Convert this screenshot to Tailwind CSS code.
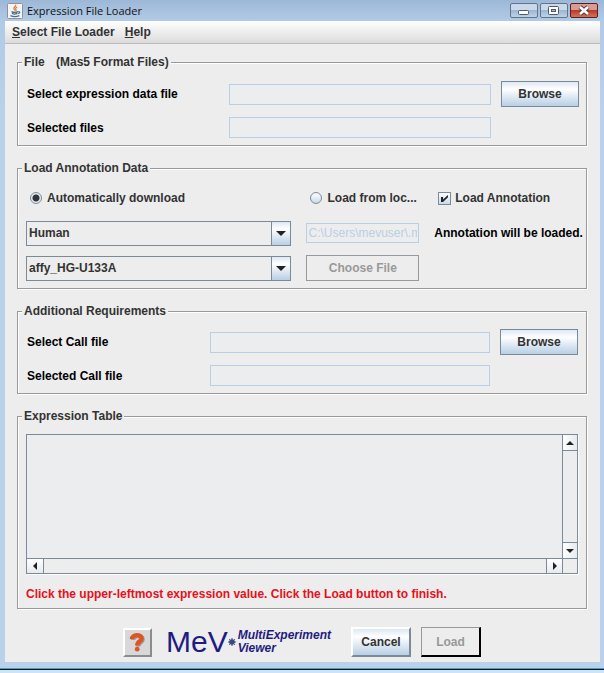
<!DOCTYPE html>
<html lang="en">
<head>
    <meta charset="UTF-8">
    <meta name="viewport" content="width=device-width, initial-scale=1.0">
    <title>Expression File Loader</title>
    <script src="https://cdn.jsdelivr.net/npm/@tailwindcss/browser@4"></script>
</head>
<body class="min-h-screen flex flex-col bg-[#cfe3f8] font-['Liberation_Sans',Arial,sans-serif] text-xs leading-4 font-bold text-[#333]">

    <div class="flex flex-col bg-linear-to-b from-[#9db8d7] via-[#b1cae6] via-[21px] to-[#b9d1ea] to-[110px] pl-[5px] pr-1 pb-1.5 border-b border-[#3aa9c4]">

        <!-- title bar -->
        <header class="flex items-center h-[21px] gap-1 pl-0.5">
            <svg class="size-4" viewBox="0 0 16 16" fill="none">
                <rect x="0.5" y="0.5" width="15" height="15" rx="1" fill="#f4f4f2" stroke="#8d9299"/>
                <path d="M8.6 1.8c1 1.6-2.6 2.4-1.6 4.2.3.6.8.9.8 1.6M10.2 4c-1.6.8-2 1.6-1.2 2.6.4.6 0 1-.4 1.4" stroke="#d9772b" stroke-width="1.2"/>
                <path d="M4.5 8.6c1.6.8 5 .8 6.6 0M5 10.4c1.6.7 4 .7 5.4 0M11.4 8.6c1.8-.4 1.8 1.4-.2 2M3.4 12.6c2.4 1 6.6 1 9 0" stroke="#4b6c8e" stroke-width="1.2"/>
            </svg>
            <h1 class="grow font-['Open_Sans',sans-serif] text-[11px] font-normal text-[#111]">Expression File Loader</h1>
            <div class="flex gap-0.5 pr-0.5">
                <button type="button" aria-label="Minimize" class="w-7 h-[15px] rounded-xs border border-[#62738a] bg-linear-to-b from-[#c9d9eb] from-50% via-[#9fb6d1] via-50% to-[#bdd3ea]">
                    <svg class="w-full h-full" viewBox="0 0 26 13"><rect x="7.5" y="6.5" width="10" height="4" rx="1" fill="#fff" stroke="#4c5869"/></svg>
                </button>
                <button type="button" aria-label="Maximize" class="w-7 h-[15px] rounded-xs border border-[#62738a] bg-linear-to-b from-[#c9d9eb] from-50% via-[#9fb6d1] via-50% to-[#bdd3ea]">
                    <svg class="w-full h-full" viewBox="0 0 26 13"><rect x="7.5" y="2.5" width="10" height="8" rx="1" fill="#fff" stroke="#4c5869"/><rect x="10.5" y="5.5" width="4" height="2" fill="#a9bdd6" stroke="#4c5869"/></svg>
                </button>
                <button type="button" aria-label="Close" class="w-7 h-[15px] rounded-xs border border-[#5a1f22] bg-linear-to-b from-[#dc9a90] from-50% via-[#b93a28] via-50% to-[#d4735a]">
                    <svg class="w-full h-full" viewBox="0 0 26 13"><path d="M9 3l8 7M17 3l-8 7" stroke="#5d3a40" stroke-width="4.6"/><path d="M9 3l8 7M17 3l-8 7" stroke="#fff" stroke-width="2.6"/></svg>
                </button>
            </div>
        </header>

        <!-- menu bar -->
        <nav class="flex gap-2.5 h-[23px] px-[7px] pt-[3px] bg-linear-to-b from-white to-[#dcdcdc] border-b border-[#bbb]">
            <a href="#"><span class="underline">S</span>elect File Loader</a>
            <a href="#"><span class="underline">H</span>elp</a>
        </nav>

        <main class="bg-[#ededed] pl-3 pr-[13px] pt-2.5 pb-[5px]">
            <form class="flex flex-col gap-3.5">

                <fieldset class="grid grid-cols-[192px_1fr_78px] gap-2.5 items-center border border-[#999] shadow-[1px_1px_0_#fff,inset_1px_1px_0_#fff] pl-[9px] pr-[7px] pt-[11px] pb-[7px]">
                    <legend class="-ml-[5px] px-0.5 bg-[#ededed]">File <span class="pl-2">(Mas5 Format Files)</span></legend>
                    <label for="data-file" class="text-black">Select expression data file</label>
                    <input id="data-file" type="text" disabled class="min-w-0 h-[21px] border border-[#b8cfe5] bg-[#ebedef]">
                    <button type="button" class="h-[26px] border border-[#7a8a99] bg-linear-to-b from-[#dde8f3] via-white via-30% to-[#b8cfe5]">Browse</button>
                    <label for="selected-files" class="text-black">Selected files</label>
                    <input id="selected-files" type="text" disabled class="min-w-0 h-[21px] border border-[#b8cfe5] bg-[#ebedef]">
                </fieldset>

                <fieldset class="grid grid-cols-[minmax(0,266fr)_minmax(0,113fr)_minmax(0,144fr)] grid-rows-[26px_26px_26px] gap-x-[15px] gap-y-[9px] items-center border border-[#999] shadow-[1px_1px_0_#fff,inset_1px_1px_0_#fff] px-2 pt-[9px] pb-[7px]">
                    <legend class="-ml-1 px-0.5 bg-[#ededed]">Load Annotation Data</legend>
                    <label class="flex items-center gap-[5px] pl-1">
                        <input type="radio" name="source" checked class="appearance-none size-3 rounded-full border border-[#7a8a99] bg-linear-to-b from-white to-[#c8daeb] checked:bg-[radial-gradient(circle,#333_3px,#e4edf6_4px)]">
                        Automatically download
                    </label>
                    <label class="flex items-center gap-[5px] pl-1 whitespace-nowrap">
                        <input type="radio" name="source" class="appearance-none size-3 rounded-full border border-[#7a8a99] bg-linear-to-b from-white to-[#c8daeb] checked:bg-[radial-gradient(circle,#333_3px,#e4edf6_4px)]">
                        Load from loc...
                    </label>
                    <label class="flex items-center gap-1 pl-1 whitespace-nowrap">
                        <span class="grid size-[13px]">
                            <input type="checkbox" checked class="peer col-start-1 row-start-1 appearance-none size-[13px] border border-[#7a8a99] bg-linear-to-b from-white to-[#c8daeb]">
                            <svg class="col-start-1 row-start-1 size-[13px] pointer-events-none invisible peer-checked:visible" viewBox="0 0 13 13"><path d="M3 5h2v2.5L10 3v2.2L5 10H3z" fill="#222"/></svg>
                        </span>
                        Load Annotation
                    </label>

                    <div class="grid">
                        <select aria-label="Species" class="col-start-1 row-start-1 appearance-none w-full h-[25px] border border-[#7a8a99] pl-0.5 pr-5">
                            <option>Human</option>
                        </select>
                        <span class="col-start-1 row-start-1 justify-self-end grid place-items-center w-5 h-[25px] border border-[#7a8a99] bg-linear-to-b from-[#dde8f3] via-white via-30% to-[#b8cfe5] pointer-events-none">
                            <svg class="w-2.5 h-[5px]" viewBox="0 0 10 5"><path d="M0 0h10L5 5z" fill="#222"/></svg>
                        </span>
                    </div>
                    <input type="text" aria-label="Annotation file" disabled value="C:\Users\mevuser\.mev" class="min-w-0 h-5 px-px border border-[#b8cfe5] font-normal text-[#b8cfe5]">
                    <p class="text-black whitespace-nowrap">Annotation will be loaded.</p>

                    <div class="grid">
                        <select aria-label="Array type" class="col-start-1 row-start-1 appearance-none w-full h-[25px] border border-[#7a8a99] pl-0.5 pr-5">
                            <option>affy_HG-U133A</option>
                        </select>
                        <span class="col-start-1 row-start-1 justify-self-end grid place-items-center w-5 h-[25px] border border-[#7a8a99] bg-linear-to-b from-[#dde8f3] via-white via-30% to-[#b8cfe5] pointer-events-none">
                            <svg class="w-2.5 h-[5px]" viewBox="0 0 10 5"><path d="M0 0h10L5 5z" fill="#222"/></svg>
                        </span>
                    </div>
                    <button type="button" disabled class="h-[26px] border border-[#999] text-[#999]">Choose File</button>
                </fieldset>

                <fieldset class="grid grid-cols-[173px_1fr_78px] gap-2.5 items-center border border-[#999] shadow-[1px_1px_0_#fff,inset_1px_1px_0_#fff] pl-[9px] pr-2 pt-2.5 pb-[7px]">
                    <legend class="-ml-[5px] px-0.5 bg-[#ededed]">Additional Requirements</legend>
                    <label for="call-file" class="text-black">Select Call file</label>
                    <input id="call-file" type="text" disabled class="min-w-0 h-[21px] border border-[#b8cfe5] bg-[#ebedef]">
                    <button type="button" class="h-[26px] border border-[#7a8a99] bg-linear-to-b from-[#dde8f3] via-white via-30% to-[#b8cfe5]">Browse</button>
                    <label for="selected-call-file" class="text-black">Selected Call file</label>
                    <input id="selected-call-file" type="text" disabled class="min-w-0 h-[21px] border border-[#b8cfe5] bg-[#ebedef]">
                </fieldset>

                <fieldset class="border border-[#999] shadow-[1px_1px_0_#fff,inset_1px_1px_0_#fff] px-2 pt-2.5 pb-1.5">
                    <legend class="-ml-1 px-0.5 bg-[#ededed]">Expression Table</legend>
                    <div class="grid grid-cols-[1fr_15px] grid-rows-[123px_15px] border border-[#7a8a99] shadow-[1px_1px_0_#fff]">
                        <div class="bg-[#ebedef]"></div>
                        <div class="flex flex-col justify-between border-l border-[#7a8a99] bg-[#ebedef]">
                            <button type="button" aria-label="Scroll up" class="grid place-items-center h-4 border-b border-[#7a8a99] bg-linear-to-r from-white to-[#e6ebf0]">
                                <svg class="w-2 h-1" viewBox="0 0 8 4"><path d="M0 4h8L4 0z" fill="#222"/></svg>
                            </button>
                            <button type="button" aria-label="Scroll down" class="grid place-items-center h-4 border-t border-[#7a8a99] bg-linear-to-r from-white to-[#e6ebf0]">
                                <svg class="w-2 h-1" viewBox="0 0 8 4"><path d="M0 0h8L4 4z" fill="#222"/></svg>
                            </button>
                        </div>
                        <div class="flex justify-between border-t border-[#7a8a99] bg-[#ededed]">
                            <button type="button" aria-label="Scroll left" class="grid place-items-center w-[17px] border-r border-[#7a8a99] bg-linear-to-b from-white to-[#e6ebf0]">
                                <svg class="w-1 h-2" viewBox="0 0 4 8"><path d="M4 0v8L0 4z" fill="#222"/></svg>
                            </button>
                            <button type="button" aria-label="Scroll right" class="grid place-items-center w-4 border-l border-[#7a8a99] bg-linear-to-b from-white to-[#e6ebf0]">
                                <svg class="w-1 h-2" viewBox="0 0 4 8"><path d="M0 0v8l4-4z" fill="#222"/></svg>
                            </button>
                        </div>
                        <div class="border-l border-t border-[#7a8a99]"></div>
                    </div>
                    <p class="pt-3 text-[#e8101c]">Click the upper-leftmost expression value. Click the Load button to finish.</p>
                </fieldset>
            </form>

            <!-- help, logo and actions -->
            <footer class="flex justify-center items-center pt-[18px]">
                <button type="button" aria-label="Help" class="grid place-items-center size-[29px] border-2 border-t-white border-l-white border-b-[#8c8c8c] border-r-[#8c8c8c] bg-[#d8d8d8]">
                    <svg class="w-4 h-5" viewBox="0 0 16 20" fill="none">
                        <path d="M3 7C3 2 12.6 2 12.6 6.4 12.6 9.4 8.2 9.2 8.2 13.4" stroke="#9a9a9a" stroke-width="4.4" transform="translate(1 1)"/>
                        <path d="M3 7C3 2 12.6 2 12.6 6.4 12.6 9.4 8.2 9.2 8.2 13.4" stroke="#dd5522" stroke-width="4.4"/>
                        <circle cx="8.2" cy="17.2" r="2.4" fill="#dd5522"/>
                    </svg>
                </button>
                <div class="flex items-center pl-3.5 pr-5 text-[#1f1c80]">
                    <span class="text-[30px] leading-[30px] font-normal">MeV</span>
                    <svg class="size-2" viewBox="0 0 8 8"><circle cx="4" cy="4" r="2.8" fill="#3a4a80"/><path d="M4 0v8M0 4h8M1.2 1.2l5.600 5.600M6.800 1.200L1.200 6.800" stroke="#3a4a80"/></svg>
                    <span class="pl-0.5 leading-[13px] italic">MultiExperiment<br>Viewer</span>
                </div>
                <div class="flex gap-2.5">
                    <button type="button" class="w-[60px] h-[30px] border-2 border-t-white border-l-white border-b-[#7a8a99] border-r-[#7a8a99] bg-linear-to-b from-[#dde8f3] via-white via-30% to-[#b8cfe5]">Cancel</button>
                    <button type="button" disabled class="w-[60px] h-[30px] border-t border-l border-b-2 border-r-2 border-t-[#999] border-l-[#999] border-b-black border-r-black text-[#999]">Load</button>
                </div>
            </footer>
        </main>
    </div>
    <div class="h-px bg-[#111]"></div>
</body>
</html>
